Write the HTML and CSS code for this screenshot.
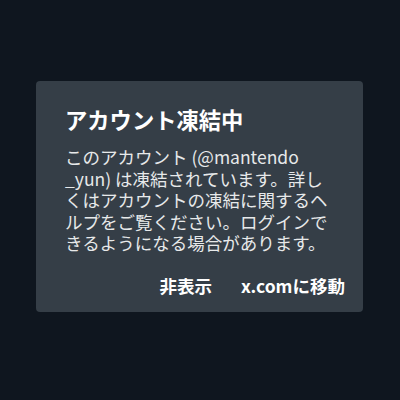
FILE: index.html
```html
<!DOCTYPE html>
<html lang="ja">
<head>
  <meta charset="UTF-8" />
  <title>アカウント凍結中</title>
  <link rel="stylesheet" href="styles.css">
</head>
<body>

  <div class="dialog">
    <h2>アカウント凍結中</h2>
    <p class="message">このアカウント (@mantendo<wbr>_yun) は凍結されています。詳しくはアカウントの凍結に関するヘルプをご覧ください。ログインできるようになる場合があります。</p>
    <div class="actions">
      <button class="action">非表示</button>
      <button class="action">x.comに移動</button>
    </div>
  </div>

</body>
</html>
```

FILE: styles.css
```css
* {
  box-sizing: border-box;
  margin: 0;
  padding: 0;
}

body {
  font-family: "Noto Sans CJK JP", "Noto Sans", sans-serif;
  background: #0f161f;
  color: #e7e9ea;
  width: 400px;
  height: 400px;
  padding: 81px 37px 0 36px;
}

.dialog {
  background: #353e47;
  border-radius: 4px;
  height: 231px;
  padding: 24px 18px 0 29px;
}

h2 {
  font-size: 22.3px;
  font-weight: 700;
  line-height: 28px;
  color: #fff;
  margin-bottom: 13px;
}

.message {
  font-size: 17.5px;
  line-height: 21.5px;
  width: 272px;
}

.actions {
  display: flex;
  justify-content: flex-end;
  gap: 29px;
  margin-top: 22px;
}

.action {
  font-family: inherit;
  font-size: 17.5px;
  font-weight: 700;
  line-height: 20px;
  color: #fff;
  background: none;
  border: none;
}
```
